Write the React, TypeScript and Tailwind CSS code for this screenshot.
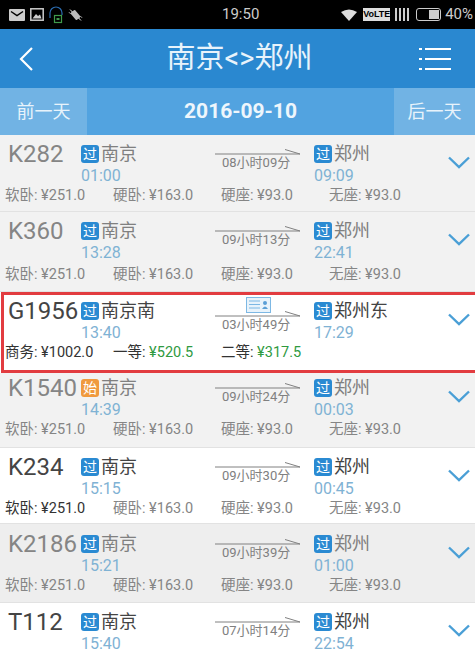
const FONT = '[font-family:Roboto,"Noto_Sans_CJK_SC",sans-serif]'

type Train = {
  no: string
  from: string
  dep: string
  duration: string
  to: string
  arr: string
  bg: string
  dark?: boolean
}

const k282: Train = { no: 'K282', from: '南京', dep: '01:00', duration: '08小时09分', to: '郑州', arr: '09:09', bg: 'bg-[#f2f2f2]' }
const k360: Train = { no: 'K360', from: '南京', dep: '13:28', duration: '09小时13分', to: '郑州', arr: '22:41', bg: 'bg-[#f2f2f2]' }
const g1956: Train = { no: 'G1956', from: '南京南', dep: '13:40', duration: '03小时49分', to: '郑州东', arr: '17:29', bg: 'bg-white' }
const k1540: Train = { no: 'K1540', from: '南京', dep: '14:39', duration: '09小时24分', to: '郑州', arr: '00:03', bg: 'bg-[#f2f2f2]' }
const k234: Train = { no: 'K234', from: '南京', dep: '15:15', duration: '09小时30分', to: '郑州', arr: '00:45', bg: 'bg-white', dark: true }
const k2186: Train = { no: 'K2186', from: '南京', dep: '15:21', duration: '09小时39分', to: '郑州', arr: '01:00', bg: 'bg-[#eeeeee]' }
const t112: Train = { no: 'T112', from: '南京', dep: '15:40', duration: '07小时14分', to: '郑州', arr: '22:54', bg: 'bg-white', dark: true }

function Badge({ label = '过', orange = false }: { label?: string; orange?: boolean }) {
  return (
    <span className={`flex h-[18px] w-[18px] shrink-0 items-center justify-center rounded-[3px] text-[14px] leading-none text-white ${orange ? 'bg-[#f09a3e]' : 'bg-[#2a8ad2]'}`}>
      {label}
    </span>
  )
}

function Arrow() {
  return (
    <svg width="86" height="6" viewBox="0 0 86 6" className="block">
      <path d="M0 5H85L70 0.5" fill="none" stroke="#808080" strokeWidth="1" />
    </svg>
  )
}

function Chevron() {
  return (
    <svg width="22" height="13" viewBox="0 0 22 13" className="block">
      <path d="M1 1.5L11 11L21 1.5" fill="none" stroke="#4a9fd6" strokeWidth="2.4" />
    </svg>
  )
}

function Route({ t, badge, bold, icon }: { t: Train; badge?: string; bold?: boolean; icon?: boolean }) {
  const strong = bold || t.dark
  return (
    <div className="flex h-[52px] items-start">
      <div className={`w-[81px] shrink-0 pl-[8px] pt-[2px] text-[24px] leading-[34px] ${strong ? 'text-[#444444]' : 'text-[#858585]'}`}>
        {t.no}
      </div>
      <div className="w-[134px] shrink-0 pt-[9px]">
        <div className="flex items-center gap-[2px]">
          <Badge label={badge ?? '过'} orange={badge === '始'} />
          <span className={`text-[18px] leading-[20px] ${strong ? 'text-[#444444]' : 'text-[#808080]'}`}>{t.from}</span>
        </div>
        <div className="pt-[1px] text-[16px] leading-[22px] text-[#7fb2d4]">{t.dep}</div>
      </div>
      <div className={`relative w-[99px] shrink-0 ${icon ? 'pt-[19px]' : 'pt-[14px]'}`}>
        {icon && (
          <svg width="25" height="17" viewBox="0 0 25 17" className="absolute left-[31px] top-[5px]">
            <rect x="0.5" y="0.5" width="24" height="15" fill="#e8f3fb" stroke="#7db8e4" />
            <path d="M3 4H14M3 7.5H14M3 11H14" stroke="#7db8e4" />
            <circle cx="19" cy="6" r="2" fill="#5a9fd6" />
            <path d="M16 12Q19 7 22 12Z" fill="#5a9fd6" />
          </svg>
        )}
        <Arrow />
        <div className="pl-[7px] text-[13px] leading-[15px] text-[#808080]">{t.duration}</div>
      </div>
      <div className="w-[134px] shrink-0 pt-[9px]">
        <div className="flex items-center gap-[2px]">
          <Badge />
          <span className={`text-[18px] leading-[20px] ${strong ? 'text-[#444444]' : 'text-[#808080]'}`}>{t.to}</span>
        </div>
        <div className="pt-[1px] text-[16px] leading-[22px] text-[#7fb2d4]">{t.arr}</div>
      </div>
      <div className="pt-[21px]">
        <Chevron />
      </div>
    </div>
  )
}

function Prices({ firstDark, className = '' }: { firstDark?: boolean; className?: string }) {
  const items = ['软卧: ¥251.0', '硬卧: ¥163.0', '硬座: ¥93.0', '无座: ¥93.0']
  return (
    <div className={`flex pl-[5px] text-[14.5px] leading-[18px] text-[#858585] ${className}`}>
      {items.map((p, i) => (
        <span key={p} className={`w-[108px] ${firstDark && i === 0 ? 'text-[#333333]' : ''}`}>{p}</span>
      ))}
    </div>
  )
}

function Row({ t, badge, height, inner, prices }: { t: Train; badge?: string; height: string; inner?: string; prices?: string }) {
  return (
    <div className={`overflow-hidden border-b border-[#e2e2e2] ${height} ${t.bg}`}>
      <div className={inner}>
        <Route t={t} badge={badge} />
        <Prices firstDark={t.dark} className={prices} />
      </div>
    </div>
  )
}

function StatusBar() {
  return (
    <div className="flex h-[29px] items-center bg-black pl-[9px] pr-[2px] text-[#cccccc]">
      <div className="flex items-center gap-[5px]">
        <svg width="16" height="12" viewBox="0 0 16 12">
          <rect width="16" height="12" rx="1" fill="#cccccc" />
          <path d="M2 2.5L8 6.5L14 2.5" fill="none" stroke="#000" strokeWidth="1.5" />
        </svg>
        <svg width="14" height="13" viewBox="0 0 14 13">
          <rect x="0.8" y="0.8" width="12.4" height="11.4" fill="none" stroke="#cccccc" strokeWidth="1.5" />
          <path d="M2.5 10.5L6 6L8 8L10 6.5L11.5 10.5Z" fill="#cccccc" />
        </svg>
        <svg width="14" height="18" viewBox="0 0 14 18">
          <path d="M1 12V7A6 6 0 0 1 13 7V9" fill="none" stroke="#2b6cb0" strokeWidth="1.2" />
          <rect x="5.5" y="9.5" width="7" height="7" fill="none" stroke="#3f9a4a" strokeWidth="1.2" />
          <rect x="7.5" y="12" width="3" height="2" fill="#3f9a4a" />
        </svg>
        <svg width="15" height="14" viewBox="0 0 16 14">
          <rect x="5" y="2" width="6" height="10" rx="1" transform="rotate(-40 8 7)" fill="#bbbbbb" />
          <path d="M1 4L3 6M3 2L5 4M11 10L13 12M13 8L15 10M2 1L14 13" stroke="#bbbbbb" strokeWidth="1" />
        </svg>
      </div>
      <span className="ml-[139px] w-[52px] text-[15px] leading-none text-[#cccccc]">19:50</span>
      <div className="ml-auto flex items-center">
        <svg width="16" height="12" viewBox="0 0 16 12" className="mr-[6px]">
          <path d="M0 3Q8 -2 16 3L8 12Z" fill="#dddddd" />
        </svg>
        <span className="mr-[5px] h-[13px] w-[27px] bg-[#dddddd] text-center text-[9px] font-bold leading-[13px] text-black [font-family:'Liberation_Sans',sans-serif]">VoLTE</span>
        <div className="mr-[7px] flex h-[13px] gap-[2px]">
          {[0, 1, 2, 3].map((i) => (
            <span key={i} className="h-full w-[2px] bg-[#cccccc]" />
          ))}
        </div>
        <div className="mr-[4px] h-[13px] w-[25px] rounded-[3px] border border-[#cccccc] p-[1px]">
          <div className="ml-auto h-full w-[10px] bg-[#cccccc]" />
        </div>
        <span className="text-[15px] leading-none">40%</span>
      </div>
    </div>
  )
}

export default function App() {
  return (
    <div className={`h-[654px] w-[475px] overflow-hidden bg-white ${FONT}`}>
      <StatusBar />

      <header className="grid h-[59px] grid-cols-[1fr_auto_1fr] items-center bg-[#2a88d0] pl-[18px] pr-[14px]">
        <svg width="16" height="26" viewBox="0 0 16 26">
          <path d="M14 2L3 13L14 24" fill="none" stroke="#ffffff" strokeWidth="2.2" />
        </svg>
        <h1 className="text-[29px] font-normal leading-none text-[#e8f3fb]">南京&lt;&gt;郑州</h1>
        <svg width="32" height="24" viewBox="0 0 32 24" className="mr-[10px] justify-self-end">
          <path d="M6 2H32M6 12H32M6 22H32" stroke="#ffffff" strokeWidth="2" />
          <path d="M0 2H3M0 12H3M0 22H3" stroke="#ffffff" strokeWidth="2" />
        </svg>
      </header>

      <div className="flex h-[47px] items-center bg-[#52a3e0] text-white">
        <div className="flex h-full w-[87px] items-center justify-center bg-[#71b3e4] text-[18px] text-[#e8f3fb]">前一天</div>
        <div className="flex-1 text-center text-[21px] font-bold text-[#eef6fc]">2016-09-10</div>
        <div className="flex h-full w-[81px] items-center justify-center bg-[#71b3e4] text-[18px] text-[#e8f3fb]">后一天</div>
      </div>

      <Row t={k282} height="h-[77px]" />
      <Row t={k360} height="h-[80px]" prices="pt-[2px]" />

      <div className="relative h-[81px] overflow-hidden bg-white">
        <Route t={g1956} bold icon />
        <div className="flex pl-[5px] text-[14.5px] leading-[18px] text-[#333333]">
          <span className="w-[108px]">商务: ¥1002.0</span>
          <span className="w-[108px]">一等: <span className="text-[#2f9a3f]">¥520.5</span></span>
          <span className="w-[108px]">二等: <span className="text-[#2f9a3f]">¥317.5</span></span>
        </div>
        <div className="absolute bottom-0 left-[1px] -right-[4px] top-0 border-[3px] border-[#e23c40]" />
      </div>

      <Row t={k1540} badge="始" height="h-[75px]" inner="-mt-[4px]" />
      <Row t={k234} height="h-[76px]" />
      <Row t={k2186} height="h-[79px]" inner="mt-[1px]" />
      <div className={`h-[51px] overflow-hidden ${t112.bg}`}>
        <Route t={t112} />
      </div>
    </div>
  )
}
